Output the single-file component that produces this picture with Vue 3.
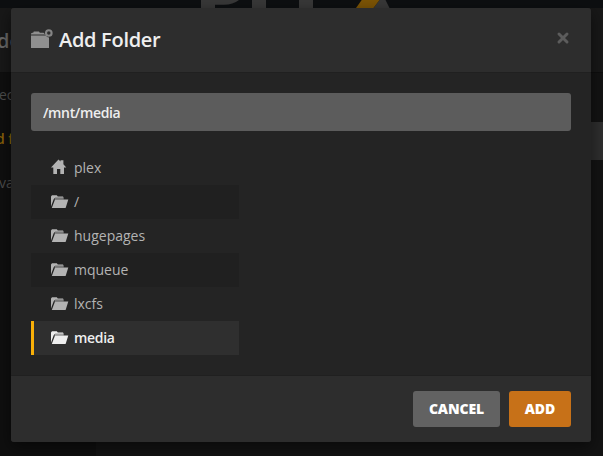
<script setup>
import { ref } from 'vue'

const path = ref('/mnt/media')
const selected = ref('media')
const folders = ['plex', '/', 'hugepages', 'mqueue', 'lxcfs', 'media']
</script>

<template>
  <div class="page">
    <div class="backdrop-page" aria-hidden="true">
      <div class="topbar">
        <svg class="logo" width="200" height="8" viewBox="0 0 200 8">
          <path fill="#383838" d="M1 0H39Q33 4.700 24 4.700H15V8H1ZM52 0H66V8H52ZM99 0H113V8H99ZM173.500 8L179.500 0H185.500L189.500 8Z" />
          <path fill="#7c5405" d="M156 8L161.700 0H179.500L173.500 8Z" />
        </svg>
      </div>
      <div class="under-head"><span>de</span></div>
      <div class="under-body">
        <div class="under-side">
          <span>ec</span>
          <span class="current">d f</span>
          <span>va</span>
        </div>
        <div class="under-main"><div class="under-input"></div></div>
      </div>
    </div>

    <section class="modal" role="dialog">
      <header class="head">
        <svg class="add-icon" width="22" height="20" viewBox="0 0 22 20">
          <path fill="#909090" d="M0 5.500V4.500L1.300 3.700H2.200L2.800 2.500H8L8.800 3.700H12.500L14.300 5.500ZM0 6.600H14.800Q16 8.400 18 8.600V19H0Z" />
          <circle cx="17.800" cy="4" r="2.800" fill="none" stroke="#858585" stroke-width="2.100" />
        </svg>
        <h1>Add Folder</h1>
        <button class="close" aria-label="Close">
          <svg width="14" height="14" viewBox="0 0 14 14">
            <path d="M3 3L11 11M11 3L3 11" stroke="#5c5c5c" stroke-width="3" stroke-linecap="round" />
          </svg>
        </button>
      </header>

      <div class="body">
        <input v-model="path" class="path" type="text" spellcheck="false" />
        <ul class="list">
          <li
            v-for="name in folders"
            :key="name"
            :class="{ selected: name === selected }"
            @click="selected = name"
          >
            <svg v-if="name === 'plex'" width="18" height="16" viewBox="0 0 18 16">
              <path fill="currentColor" d="M7.500 .5L9.500 2.400V1.200H12.400V5.200L15.300 8.400H13V15H9.300V10H6V15H2.300V8.400H0Z" />
            </svg>
            <svg v-else width="18" height="16" viewBox="0 0 18 16">
              <path fill="currentColor" d="M0 13.500V3.500L1 2.300H5.800L6.800 3.500H12L12.700 4.800H4L2.800 6Z" />
              <path fill="currentColor" opacity="0.6" d="M4 4.800H12.700V6.500H3.400Z" />
              <path fill="currentColor" d="M4 6.500H17.300L14.600 15H.8Z" />
            </svg>
            <span>{{ name }}</span>
          </li>
        </ul>
      </div>

      <footer class="foot">
        <button class="btn">CANCEL</button>
        <button class="btn primary">ADD</button>
      </footer>
    </section>
  </div>
</template>

<style>
body {
  background: #121212;
  overflow: hidden;
}
</style>

<style scoped>
* {
  box-sizing: border-box;
}
.page {
  position: relative;
  width: 603px;
  height: 456px;
  overflow: hidden;
  font-family: "Open Sans", sans-serif;
  font-size: 14px;
}
.backdrop-page {
  display: flex;
  flex-direction: column;
  height: 100%;
  color: #4c4c4c;
}
.topbar {
  height: 8px;
  padding-left: 200px;
  background: #0d0f11;
}
.logo {
  display: block;
}
.under-head {
  display: flex;
  align-items: center;
  height: 65px;
  background: #181818;
  border-bottom: 1px solid #0e0e0e;
  font-size: 20px;
  font-weight: 600;
  color: #666;
}
.under-head span {
  margin-left: -3px;
}
.under-body {
  display: flex;
  flex: 1;
}
.under-side {
  display: flex;
  flex-direction: column;
  width: 96px;
  background: #0f0f0f;
}
.under-side span {
  height: 44px;
  line-height: 44px;
  margin-left: -1px;
}
.under-side .current {
  color: #8a6108;
  font-weight: 600;
  margin-left: -4px;
}
.under-main {
  flex: 1;
  padding-top: 49px;
  background: #131313;
}
.under-input {
  height: 38px;
  background: #2e2e2e;
}
.modal {
  position: absolute;
  left: 11px;
  top: 8px;
  display: flex;
  flex-direction: column;
  width: 580px;
  height: 434px;
  overflow: hidden;
  border-radius: 3px;
  background: #242424;
  box-shadow: 0 5px 15px rgba(0, 0, 0, 0.5);
}
.head {
  display: flex;
  align-items: center;
  height: 65px;
  padding: 0 21px 0 20px;
  background: #2d2d2d;
  border-bottom: 1px solid #202020;
}
.add-icon {
  margin: -2px 6px 0 0;
}
h1 {
  flex: 1;
  margin: 0;
  font-size: 20px;
  line-height: 28px;
  font-weight: 600;
  letter-spacing: -0.3px;
  color: #eee;
}
.close {
  display: flex;
  padding: 0;
  margin-top: -4px;
  border: 0;
  background: none;
}
.body {
  flex: 1;
  padding: 20px;
}
.path {
  display: block;
  width: 100%;
  height: 38px;
  padding: 0 12px;
  border: 0;
  border-radius: 3px;
  outline: 0;
  background: #5c5c5c;
  color: #eee;
  font: 600 14px "Open Sans", sans-serif;
  letter-spacing: -0.35px;
}
.list {
  width: 208px;
  margin: 20px 0 0;
  padding: 0;
  list-style: none;
}
.list li {
  display: flex;
  align-items: center;
  gap: 5px;
  height: 34px;
  padding: 0 0 2px 17px;
  border-left: 3px solid transparent;
  color: #b3b3b3;
}
.list li:nth-child(even) {
  background: #202020;
  border-left-color: #202020;
}
.list li.selected {
  background: #2f2f2f;
  border-left-color: #f9b008;
  color: #eee;
  font-weight: 600;
  letter-spacing: -0.3px;
}
.foot {
  display: flex;
  justify-content: flex-end;
  gap: 9px;
  height: 67px;
  padding: 15px 20px;
  background: #2d2d2d;
  border-top: 1px solid #202020;
}
.btn {
  width: 87px;
  height: 36px;
  padding: 0 0 2px;
  border: 0;
  border-radius: 3px;
  background: #626262;
  color: #fff;
  font: 800 14px "Open Sans", sans-serif;
  letter-spacing: -0.1px;
}
.btn.primary {
  width: 62px;
  background: #c77118;
}
</style>
